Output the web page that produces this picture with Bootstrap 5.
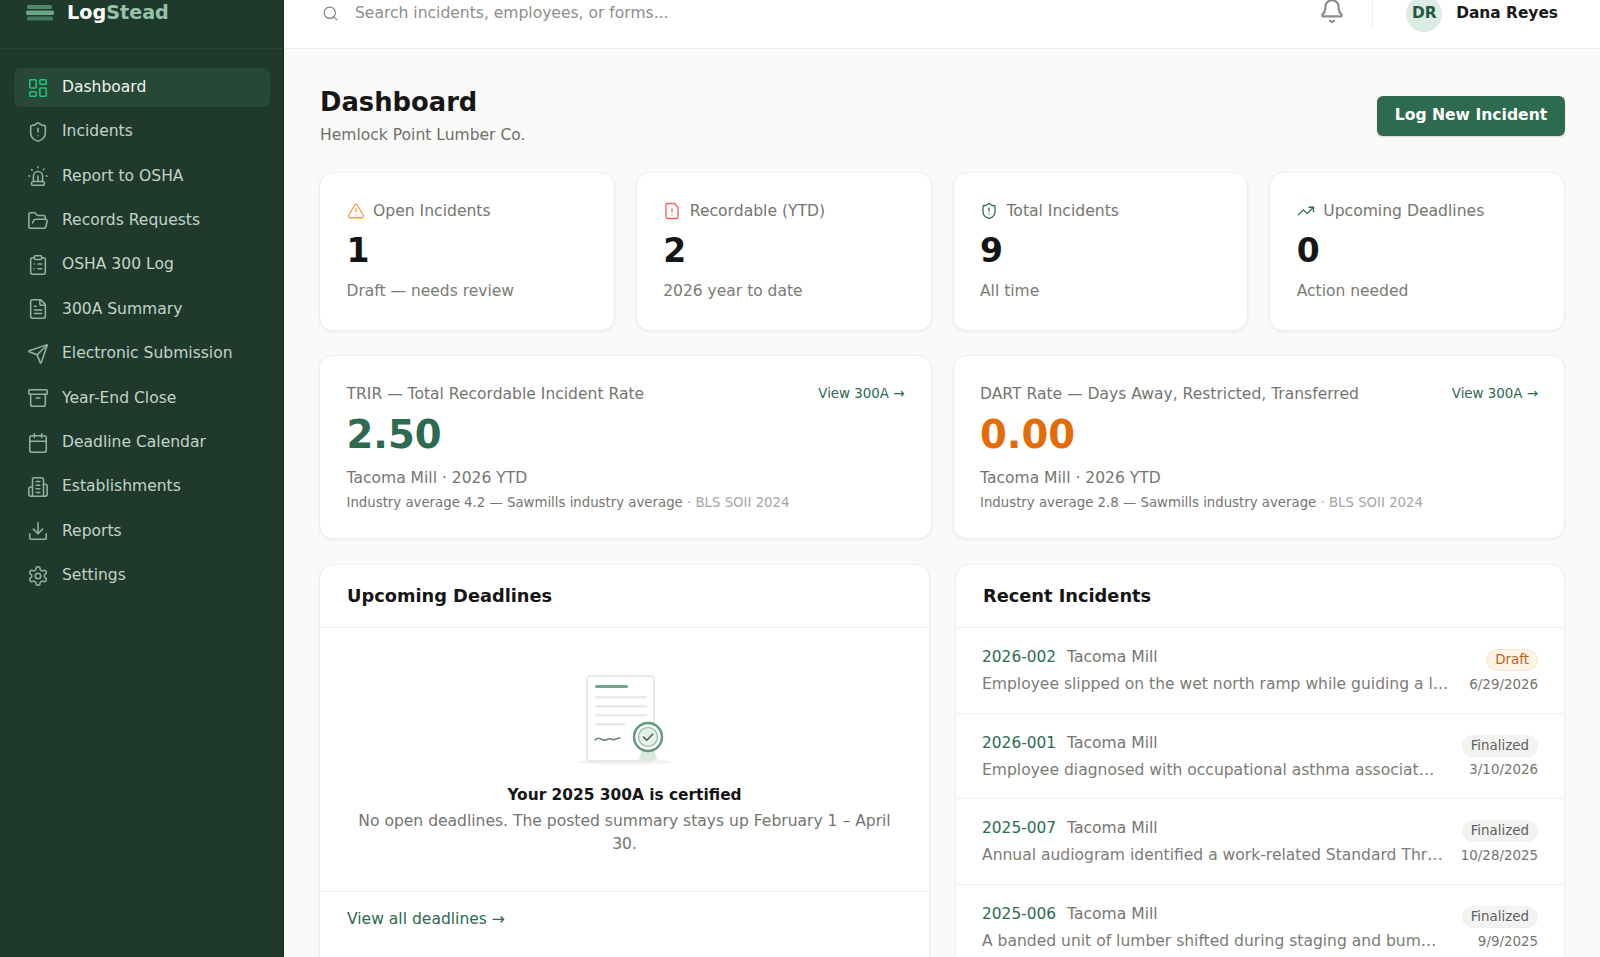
<!DOCTYPE html>
<html lang="en">
<head>
    <meta charset="utf-8">
    <title>LogStead Dashboard</title>
    <link href="https://cdn.jsdelivr.net/npm/bootstrap@5.3.0/dist/css/bootstrap.min.css" rel="stylesheet">
    <style>
        html, body { height: 957px; overflow: hidden; }
        body { font-family: "DejaVu Sans", sans-serif; background: #fafaf9; color: #1a1a1a; font-size: 15px; }
        svg.ico { fill: none; stroke: currentColor; stroke-width: 2; stroke-linecap: round; stroke-linejoin: round; flex: none; }
        .app-shell { height: 957px; }
        .main-col { min-width: 0; }
        .side-bar { width: 284px; flex: none; background: #1f3a2d; border-right: 1px solid #18291f; }
        .side-brand { height: 49px; padding: 0 0 22px 26px; border-bottom: 1px solid #264334; font-size: 19.2px; font-weight: 700; color: #fff; gap: 13px; }
        .side-brand em { font-style: normal; color: #95c2a8; }
        .side-menu { padding: 19px 13px 0 14px; }
        .side-link { height: 39px; margin-bottom: 5.4px; padding: 0 13px; gap: 13px; border-radius: 7px; color: #c4d4c9; font-size: 15.55px; text-decoration: none; }
        .side-link svg { color: #8fb39f; width: 22px; height: 22px; stroke-width: 1.7; }
        .side-link.is-on { background: #274737; color: #f0f5f1; }
        .side-link.is-on svg { color: #22c47d; }
        .top-bar { height: 49px; background: #fff; border-bottom: 1px solid #ececea; padding: 0 42px 21px 38px; }
        .top-search { color: #8e8e8a; font-size: 15.55px; gap: 16px; }
        .top-search svg { width: 17px; height: 17px; stroke-width: 1.7; color: #85857f; }
        .top-bell { width: 26px; height: 26px; color: #8b8b87; stroke-width: 1.6; margin: 0 27px 6px 0; }
        .top-rule { width: 1px; height: 27px; background: #ececea; margin-right: 33px; }
        .user-avatar { width: 36px; height: 36px; border-radius: 50%; background: #dcebe3; color: #1f5a41; font-size: 15.4px; font-weight: 700; margin-right: 14px; }
        .user-name { font-size: 15.4px; font-weight: 700; color: #1a1a1a; }
        .page-body { padding: 36px 35px 0; }
        .page-title { font-size: 25.8px; font-weight: 700; color: #161616; margin: 0 0 0 1px; line-height: 34px; }
        .page-sub { font-size: 15.55px; color: #6f6f6a; line-height: 20px; margin: 6px 0 0 1px; }
        .btn-log { background: #2d6a4f; border: 0; color: #fff; font-size: 15.6px; font-weight: 700; height: 40px; width: 188px; padding: 0; border-radius: 6px; margin-top: 11px; box-shadow: 0 1px 2px rgba(0,0,0,.15); }
        .btn-log:hover { background: #2d6a4f; color: #fff; }
        .grid-four { display: grid; grid-template-columns: repeat(4, 1fr); gap: 21px; margin-top: 27px; }
        .grid-two { display: grid; grid-template-columns: repeat(2, 1fr); gap: 21px; margin-top: 24px; }
        .grid-panels { display: grid; grid-template-columns: 611px 610px; gap: 25px; margin-top: 25px; }
        .tile { border: 1px solid #eeeeec; border-radius: 14px; box-shadow: 0 1px 3px rgba(0,0,0,.06); background: #fff; }
        .stat-tile { height: 159px; padding: 28px 26px 0 26.500px; }
        .stat-head { font-size: 15.6px; color: #75756f; gap: 8.5px; line-height: 20px; }
        .stat-head svg { width: 18px; height: 18px; stroke-width: 1.7; }
        .stat-num { font-size: 33px; font-weight: 700; color: #151515; line-height: 40px; margin-top: 9.5px; }
        .stat-foot { font-size: 15.5px; color: #7b7b75; line-height: 20px; margin-top: 10.5px; }
        .rate-tile { height: 184px; padding: 28px 26px 0 26.500px; }
        .rate-head { font-size: 15.55px; color: #75756f; line-height: 20px; }
        .rate-link { font-size: 13.4px; color: #2d6a4f; text-decoration: none; line-height: 20px; }
        .rate-num { font-size: 38.6px; font-weight: 700; line-height: 50px; margin-top: 6px; }
        .rate-place { font-size: 15.55px; color: #75756f; line-height: 20px; margin-top: 7.5px; }
        .rate-note { font-size: 13.3px; color: #75756f; line-height: 18px; margin-top: 6.5px; }
        .rate-note span { color: #a6a6a0; }
        .panel-tile { height: 430px; overflow: hidden; }
        .panel-head { height: 63px; padding: 0 26px 0 27px; font-size: 17.8px; font-weight: 700; color: #151515; border-bottom: 1px solid #ececea; }
        .empty-box { height: 264px; border-bottom: 1px solid #ececea; padding: 45px 33px 0; text-align: center; }
        .empty-box svg { display: block; margin: 0 auto; }
        .empty-title { font-size: 15.4px; font-weight: 700; color: #151515; line-height: 20px; margin-top: 20px; }
        .empty-text { font-size: 15.55px; color: #75756f; line-height: 22.5px; margin-top: 5px; }
        .panel-foot { padding: 17px 27px; font-size: 15.55px; color: #2d6a4f; line-height: 20px; }
        .panel-foot a { color: inherit; text-decoration: none; }
        .inc-row { height: 85.7px; padding: 18px 26px 0; border-color: #ececea; }
        .inc-id { color: #2d6a4f; font-size: 15.4px; margin-right: 11px; }
        .inc-site { color: #75756f; font-size: 15.55px; }
        .inc-desc { color: #7b7b75; font-size: 15.55px; line-height: 20px; margin-top: 4.5px; white-space: nowrap; }
        .inc-text { min-width: 0; flex: 1 1 auto; }
        .inc-meta { flex: none; margin-left: 18px; text-align: right; }
        .inc-date { font-size: 13.4px; color: #75756f; line-height: 18px; margin-top: 4.5px; }
        .state-pill { font-size: 13.4px; font-weight: 400; padding: 2px 8px; line-height: 16px; border-radius: 999px; display: inline-block; margin-top: 3px; }
        .state-draft { background: #fdf3e4; color: #c4601a; border: 1px solid #fbe6c8; }
        .state-final { background: #f3f3f1; color: #5f5f5a; border: 1px solid #f0f0ee; }
    </style>
</head>
<body>
<svg width="0" height="0" class="position-absolute">
    <symbol id="i-dash" viewBox="0 0 24 24"><rect width="7" height="9" x="3" y="3" rx="1"/><rect width="7" height="5" x="14" y="3" rx="1"/><rect width="7" height="9" x="14" y="12" rx="1"/><rect width="7" height="5" x="3" y="16" rx="1"/></symbol>
    <symbol id="i-shield" viewBox="0 0 24 24"><path d="M20 13c0 5-3.5 7.5-7.66 8.95a1 1 0 0 1-.67-.01C7.5 20.5 4 18 4 13V6a1 1 0 0 1 1-1c2 0 4.5-1.2 6.24-2.72a1.17 1.17 0 0 1 1.52 0C14.51 3.81 17 5 19 5a1 1 0 0 1 1 1z"/><path d="M12 8v4"/><path d="M12 16h.01"/></symbol>
    <symbol id="i-siren" viewBox="0 0 24 24"><path d="M7 18v-6a5 5 0 1 1 10 0v6"/><path d="M5 21a1 1 0 0 0 1 1h12a1 1 0 0 0 1-1v-1a2 2 0 0 0-2-2H7a2 2 0 0 0-2 2z"/><path d="M21 12h1"/><path d="M18.5 4.500 18 5"/><path d="M2 12h1"/><path d="M12 2v1"/><path d="m4.929 4.929.707.707"/><path d="M12 12v6"/></symbol>
    <symbol id="i-folder" viewBox="0 0 24 24"><path d="m6 14 1.5-2.9A2 2 0 0 1 9.24 10H20a2 2 0 0 1 1.94 2.5l-1.54 6a2 2 0 0 1-1.95 1.5H4a2 2 0 0 1-2-2V5a2 2 0 0 1 2-2h3.9a2 2 0 0 1 1.69.9l.81 1.2a2 2 0 0 0 1.67.9H18a2 2 0 0 1 2 2v2"/></symbol>
    <symbol id="i-clip" viewBox="0 0 24 24"><rect width="8" height="4" x="8" y="2" rx="1"/><path d="M16 4h2a2 2 0 0 1 2 2v14a2 2 0 0 1-2 2H6a2 2 0 0 1-2-2V6a2 2 0 0 1 2-2h2"/><path d="M12 11h4"/><path d="M12 16h4"/><path d="M8 11h.01"/><path d="M8 16h.01"/></symbol>
    <symbol id="i-file" viewBox="0 0 24 24"><path d="M15 2H6a2 2 0 0 0-2 2v16a2 2 0 0 0 2 2h12a2 2 0 0 0 2-2V7Z"/><path d="M14 2v4a2 2 0 0 0 2 2h4"/><path d="M10 9H8"/><path d="M16 13H8"/><path d="M16 17H8"/></symbol>
    <symbol id="i-send" viewBox="0 0 24 24"><path d="M14.536 21.686a.5.5 0 0 0 .937-.024l6.5-19a.496.496 0 0 0-.635-.635l-19 6.5a.5.5 0 0 0-.024.937l7.93 3.18a2 2 0 0 1 1.112 1.11z"/><path d="m21.854 2.147-10.94 10.939"/></symbol>
    <symbol id="i-archive" viewBox="0 0 24 24"><rect width="20" height="5" x="2" y="3" rx="1"/><path d="M4 8v11a2 2 0 0 0 2 2h12a2 2 0 0 0 2-2V8"/><path d="M10 12h4"/></symbol>
    <symbol id="i-cal" viewBox="0 0 24 24"><path d="M8 2v4"/><path d="M16 2v4"/><rect width="18" height="18" x="3" y="4" rx="2"/><path d="M3 10h18"/></symbol>
    <symbol id="i-build" viewBox="0 0 24 24"><path d="M6 22V4a2 2 0 0 1 2-2h8a2 2 0 0 1 2 2v18Z"/><path d="M6 12H4a2 2 0 0 0-2 2v6a2 2 0 0 0 2 2h2"/><path d="M18 9h2a2 2 0 0 1 2 2v9a2 2 0 0 1-2 2h-2"/><path d="M10 6h4"/><path d="M10 10h4"/><path d="M10 14h4"/><path d="M10 18h4"/></symbol>
    <symbol id="i-down" viewBox="0 0 24 24"><path d="M21 15v4a2 2 0 0 1-2 2H5a2 2 0 0 1-2-2v-4"/><polyline points="7 10 12 15 17 10"/><line x1="12" x2="12" y1="15" y2="3"/></symbol>
    <symbol id="i-gear" viewBox="0 0 24 24"><path d="M12.22 2h-.44a2 2 0 0 0-2 2v.18a2 2 0 0 1-1 1.73l-.43.25a2 2 0 0 1-2 0l-.15-.08a2 2 0 0 0-2.73.73l-.22.38a2 2 0 0 0 .73 2.73l.15.1a2 2 0 0 1 1 1.72v.51a2 2 0 0 1-1 1.74l-.15.09a2 2 0 0 0-.73 2.73l.22.38a2 2 0 0 0 2.73.73l.15-.08a2 2 0 0 1 2 0l.43.25a2 2 0 0 1 1 1.73V20a2 2 0 0 0 2 2h.44a2 2 0 0 0 2-2v-.18a2 2 0 0 1 1-1.73l.43-.25a2 2 0 0 1 2 0l.15.08a2 2 0 0 0 2.73-.73l.22-.39a2 2 0 0 0-.73-2.73l-.15-.08a2 2 0 0 1-1-1.74v-.5a2 2 0 0 1 1-1.74l.15-.09a2 2 0 0 0 .73-2.73l-.22-.38a2 2 0 0 0-2.73-.73l-.15.08a2 2 0 0 1-2 0l-.43-.25a2 2 0 0 1-1-1.73V4a2 2 0 0 0-2-2z"/><circle cx="12" cy="12" r="3"/></symbol>
    <symbol id="i-warn" viewBox="0 0 24 24"><path d="m21.73 18-8-14a2 2 0 0 0-3.48 0l-8 14A2 2 0 0 0 4 21h16a2 2 0 0 0 1.73-3"/><path d="M12 9v4"/><path d="M12 17h.01"/></symbol>
    <symbol id="i-filew" viewBox="0 0 24 24"><path d="M15 2H6a2 2 0 0 0-2 2v16a2 2 0 0 0 2 2h12a2 2 0 0 0 2-2V7Z"/><path d="M12 9v4"/><path d="M12 17h.01"/></symbol>
    <symbol id="i-trend" viewBox="0 0 24 24"><polyline points="22 7 13.5 15.5 8.5 10.5 2 17"/><polyline points="16 7 22 7 22 13"/></symbol>
    <symbol id="i-bell" viewBox="0 0 24 24"><path d="M10.268 21a2 2 0 0 0 3.464 0"/><path d="M3.262 15.326A1 1 0 0 0 4 17h16a1 1 0 0 0 .74-1.673C19.41 13.956 18 12.499 18 8A6 6 0 0 0 6 8c0 4.499-1.411 5.956-2.738 7.326"/></symbol>
    <symbol id="i-search" viewBox="0 0 24 24"><circle cx="11" cy="11" r="8"/><path d="m21 21-4.3-4.3"/></symbol>
</svg>

<div class="app-shell d-flex">
    <aside class="side-bar">
        <div class="side-brand d-flex align-items-center">
            <svg width="28" height="16" viewBox="0 0 28 16">
                <rect x="1" y="0" width="25" height="4" rx="1.5" fill="#4f8a6c"/>
                <rect x="0" y="5.5" width="28" height="4.5" rx="1.5" fill="#6da588"/>
                <rect x="1" y="11.5" width="26" height="4" rx="1.5" fill="#3f7a5c"/>
            </svg>
            <span>Log<em>Stead</em></span>
        </div>
        <nav class="side-menu nav flex-column">
            <a class="side-link is-on d-flex align-items-center" href="#"><svg class="ico"><use href="#i-dash"/></svg>Dashboard</a>
            <a class="side-link d-flex align-items-center" href="#"><svg class="ico"><use href="#i-shield"/></svg>Incidents</a>
            <a class="side-link d-flex align-items-center" href="#"><svg class="ico"><use href="#i-siren"/></svg>Report to OSHA</a>
            <a class="side-link d-flex align-items-center" href="#"><svg class="ico"><use href="#i-folder"/></svg>Records Requests</a>
            <a class="side-link d-flex align-items-center" href="#"><svg class="ico"><use href="#i-clip"/></svg>OSHA 300 Log</a>
            <a class="side-link d-flex align-items-center" href="#"><svg class="ico"><use href="#i-file"/></svg>300A Summary</a>
            <a class="side-link d-flex align-items-center" href="#"><svg class="ico"><use href="#i-send"/></svg>Electronic Submission</a>
            <a class="side-link d-flex align-items-center" href="#"><svg class="ico"><use href="#i-archive"/></svg>Year-End Close</a>
            <a class="side-link d-flex align-items-center" href="#"><svg class="ico"><use href="#i-cal"/></svg>Deadline Calendar</a>
            <a class="side-link d-flex align-items-center" href="#"><svg class="ico"><use href="#i-build"/></svg>Establishments</a>
            <a class="side-link d-flex align-items-center" href="#"><svg class="ico"><use href="#i-down"/></svg>Reports</a>
            <a class="side-link d-flex align-items-center" href="#"><svg class="ico"><use href="#i-gear"/></svg>Settings</a>
        </nav>
    </aside>

    <main class="main-col flex-grow-1 d-flex flex-column">
        <header class="top-bar d-flex align-items-center">
            <div class="top-search d-flex align-items-center flex-grow-1"><svg class="ico"><use href="#i-search"/></svg>Search incidents, employees, or forms...</div>
            <svg class="ico top-bell"><use href="#i-bell"/></svg>
            <div class="top-rule"></div>
            <div class="user-avatar d-flex align-items-center justify-content-center">DR</div>
            <div class="user-name">Dana Reyes</div>
        </header>

        <div class="page-body">
            <div class="d-flex justify-content-between align-items-start">
                <div>
                    <h1 class="page-title">Dashboard</h1>
                    <div class="page-sub">Hemlock Point Lumber Co.</div>
                </div>
                <button class="btn btn-log">Log New Incident</button>
            </div>

            <div class="grid-four">
                <div class="tile stat-tile">
                    <div class="stat-head d-flex align-items-center"><svg class="ico" style="color:#f0a23c"><use href="#i-warn"/></svg>Open Incidents</div>
                    <div class="stat-num">1</div>
                    <div class="stat-foot">Draft — needs review</div>
                </div>
                <div class="tile stat-tile">
                    <div class="stat-head d-flex align-items-center"><svg class="ico" style="color:#ee5a62"><use href="#i-filew"/></svg>Recordable (YTD)</div>
                    <div class="stat-num">2</div>
                    <div class="stat-foot">2026 year to date</div>
                </div>
                <div class="tile stat-tile">
                    <div class="stat-head d-flex align-items-center"><svg class="ico" style="color:#2d6a4f"><use href="#i-shield"/></svg>Total Incidents</div>
                    <div class="stat-num">9</div>
                    <div class="stat-foot">All time</div>
                </div>
                <div class="tile stat-tile">
                    <div class="stat-head d-flex align-items-center"><svg class="ico" style="color:#2d6a4f"><use href="#i-trend"/></svg>Upcoming Deadlines</div>
                    <div class="stat-num">0</div>
                    <div class="stat-foot">Action needed</div>
                </div>
            </div>

            <div class="grid-two">
                <div class="tile rate-tile">
                    <div class="d-flex justify-content-between">
                        <div class="rate-head">TRIR — Total Recordable Incident Rate</div>
                        <a class="rate-link" href="#">View 300A →</a>
                    </div>
                    <div class="rate-num" style="color:#2d6a4f">2.50</div>
                    <div class="rate-place">Tacoma Mill · 2026 YTD</div>
                    <div class="rate-note">Industry average 4.2 — Sawmills industry average <span>· BLS SOII 2024</span></div>
                </div>
                <div class="tile rate-tile">
                    <div class="d-flex justify-content-between">
                        <div class="rate-head">DART Rate — Days Away, Restricted, Transferred</div>
                        <a class="rate-link" href="#">View 300A →</a>
                    </div>
                    <div class="rate-num" style="color:#e36c09">0.00</div>
                    <div class="rate-place">Tacoma Mill · 2026 YTD</div>
                    <div class="rate-note">Industry average 2.8 — Sawmills industry average <span>· BLS SOII 2024</span></div>
                </div>
            </div>

            <div class="grid-panels">
                <div class="tile panel-tile">
                    <div class="panel-head d-flex align-items-center">Upcoming Deadlines</div>
                    <div class="empty-box">
                        <svg width="100" height="92" viewBox="0 0 100 92">
                            <ellipse cx="50" cy="89" rx="47" ry="3" fill="#f1f3f1"/>
                            <g transform="translate(-3 0)">
                                <rect x="15" y="3" width="67" height="85" rx="4" fill="#fff" stroke="#e4e4e1" stroke-width="1.6"/>
                                <rect x="23" y="12" width="33" height="3" rx="1.5" fill="#6fa58a"/>
                                <g fill="#e9e9e6">
                                    <rect x="23" y="23" width="52" height="2.4" rx="1.2"/>
                                    <rect x="23" y="32" width="52" height="2.4" rx="1.2"/>
                                    <rect x="23" y="41" width="52" height="2.4" rx="1.2"/>
                                    <rect x="23" y="50" width="30" height="2.4" rx="1.2"/>
                                </g>
                                <path d="M23 67c2-2 4-2 6-1s3 2 5 1 3-2 5-1 3 1 5 0 3-1 4-1" fill="none" stroke="#6f8379" stroke-width="1.5" stroke-linecap="round"/>
                                <path d="M70 76l-3 11h18l-3-11z" fill="#d9e9e0"/>
                                <circle cx="76" cy="64" r="14" fill="#fff" stroke="#5f9a7d" stroke-width="2.4"/>
                                <circle cx="76" cy="64" r="9.5" fill="#e6f0ea" stroke="#8fb9a3" stroke-width="1.2"/>
                                <path d="M71.500 64l3.200 3.200 6-6" fill="none" stroke="#44544b" stroke-width="1.5" stroke-linecap="round" stroke-linejoin="round"/>
                            </g>
                        </svg>
                        <div class="empty-title">Your 2025 300A is certified</div>
                        <div class="empty-text">No open deadlines. The posted summary stays up February 1 – April 30.</div>
                    </div>
                    <div class="panel-foot"><a href="#">View all deadlines →</a></div>
                </div>

                <div class="tile panel-tile">
                    <div class="panel-head d-flex align-items-center">Recent Incidents</div>
                    <div class="list-group list-group-flush">
                        <div class="list-group-item inc-row d-flex">
                            <div class="inc-text">
                                <div><span class="inc-id">2026-002</span><span class="inc-site">Tacoma Mill</span></div>
                                <div class="inc-desc">Employee slipped on the wet north ramp while guiding a l…</div>
                            </div>
                            <div class="inc-meta"><span class="state-pill state-draft">Draft</span><div class="inc-date">6/29/2026</div></div>
                        </div>
                        <div class="list-group-item inc-row d-flex">
                            <div class="inc-text">
                                <div><span class="inc-id">2026-001</span><span class="inc-site">Tacoma Mill</span></div>
                                <div class="inc-desc">Employee diagnosed with occupational asthma associat…</div>
                            </div>
                            <div class="inc-meta"><span class="state-pill state-final">Finalized</span><div class="inc-date">3/10/2026</div></div>
                        </div>
                        <div class="list-group-item inc-row d-flex">
                            <div class="inc-text">
                                <div><span class="inc-id">2025-007</span><span class="inc-site">Tacoma Mill</span></div>
                                <div class="inc-desc">Annual audiogram identified a work-related Standard Thr…</div>
                            </div>
                            <div class="inc-meta"><span class="state-pill state-final">Finalized</span><div class="inc-date">10/28/2025</div></div>
                        </div>
                        <div class="list-group-item inc-row d-flex">
                            <div class="inc-text">
                                <div><span class="inc-id">2025-006</span><span class="inc-site">Tacoma Mill</span></div>
                                <div class="inc-desc">A banded unit of lumber shifted during staging and bum…</div>
                            </div>
                            <div class="inc-meta"><span class="state-pill state-final">Finalized</span><div class="inc-date">9/9/2025</div></div>
                        </div>
                    </div>
                </div>
            </div>
        </div>
    </main>
</div>
<script src="https://cdn.jsdelivr.net/npm/bootstrap@5.3.0/dist/js/bootstrap.bundle.min.js"></script>
</body>
</html>
